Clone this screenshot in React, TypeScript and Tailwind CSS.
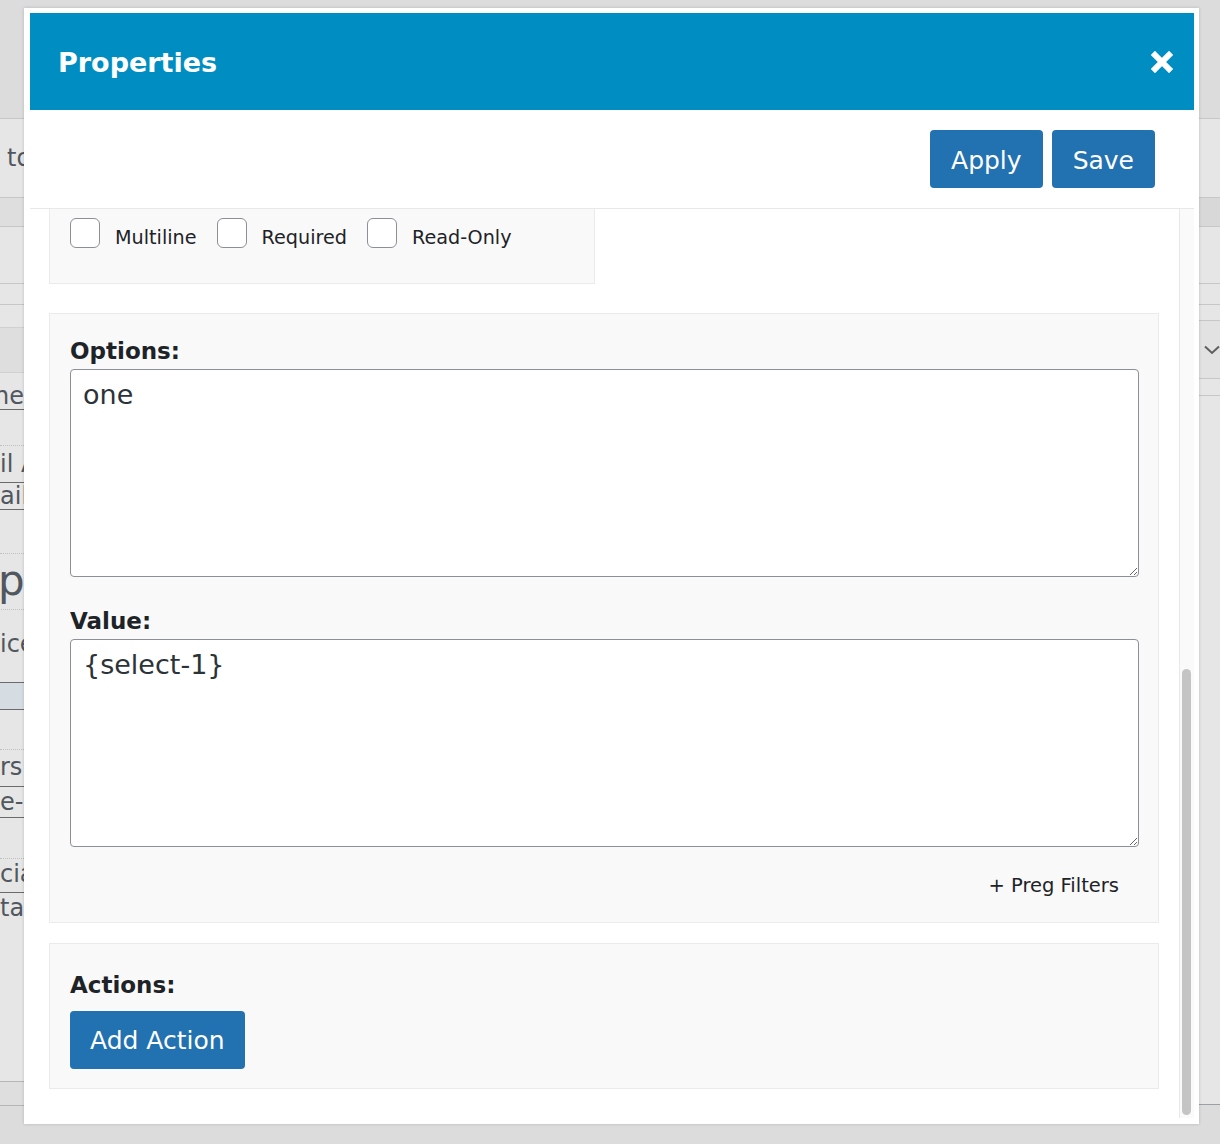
import React from "react"

const font = "font-['DejaVu_Sans','Verdana',sans-serif]"

function Checkbox({ label }: { label: string }) {
  return (
    <label className="flex items-start">
      <input
        type="checkbox"
        className="appearance-none w-[30px] h-[30px] border border-[#8c8f94] rounded-[6px] bg-white"
      />
      <span className="ml-[15px] mt-[5px] leading-[30px] text-[19.2px] text-[#1d2327]">{label}</span>
    </label>
  )
}

function BackdropLeft() {
  return (
    <div className="w-[24px] h-full overflow-hidden flex flex-col text-[#50575e] text-[24px] whitespace-nowrap">
      <div className="h-[119px] shrink-0 bg-[#dcdcdc] border-b border-[#c7c7c7]" />
      <div className="h-[79px] shrink-0 bg-[#e6e6e6] border-b border-[#c7c7c7] flex items-center pl-[7px]">to</div>
      <div className="h-[29px] shrink-0 bg-[#dedede] border-b border-[#c7c7c7]" />
      <div className="h-[57px] shrink-0 bg-[#e6e6e6] border-b border-[#c7c7c7]" />
      <div className="h-[21px] shrink-0 bg-[#e6e6e6] border-b border-[#c7c7c7]" />
      <div className="h-[776px] shrink-0 bg-[#e6e6e6] flex flex-col">
        <div className="h-[22px]" />
        <div className="h-[46px] bg-[#dedede] border-y border-[#d0d0d0]" />
        <div className="h-[12px]" />
        <div className="h-[25px] leading-[22px] border-b border-[#6b6b6b] -ml-[6px]">ne</div>
        <div className="h-[36px] border-b border-dotted border-[#c0c0c0]" />
        <div className="h-[37px] leading-[36px] border-b border-[#6b6b6b]">il A</div>
        <div className="h-[27px] leading-[26px] border-b border-[#6b6b6b]">ail</div>
        <div className="h-[44px] border-b border-dotted border-[#c0c0c0]" />
        <div className="h-[56px] leading-[54px] text-[42px] -ml-[2px] border-b border-dotted border-[#c0c0c0]">p</div>
        <div className="h-[73px] leading-[64px] border-b border-[#6b6b6b] flex items-end pb-[6px]">ice</div>
        <div className="h-[27px] bg-[#d5dde3] border-b border-[#6b6b6b]" />
        <div className="h-[40px] border-b border-dotted border-[#c0c0c0]" />
        <div className="h-[37px] leading-[34px] border-b border-[#6b6b6b]">rs</div>
        <div className="h-[31px] leading-[30px] border-b border-[#6b6b6b]">e-1</div>
        <div className="h-[41px] border-b border-dotted border-[#c0c0c0]" />
        <div className="h-[34px] leading-[30px] border-b border-[#6b6b6b]">cia</div>
        <div className="h-[30px] leading-[30px]">tar</div>
      </div>
      <div className="h-[25px] shrink-0 bg-[#dedede] border-y border-[#b5b5b5]" />
      <div className="flex-1 bg-[#dcdcdc]" />
    </div>
  )
}

function BackdropRight() {
  return (
    <div className="w-[21px] h-full overflow-hidden flex flex-col">
      <div className="h-[119px] shrink-0 bg-[#dcdcdc] border-b border-[#c7c7c7]" />
      <div className="h-[79px] shrink-0 bg-[#e6e6e6] border-b border-[#c7c7c7]" />
      <div className="h-[29px] shrink-0 bg-[#d8d8d8] border-b border-[#c7c7c7]" />
      <div className="h-[57px] shrink-0 bg-[#e6e6e6] border-b border-[#c7c7c7]" />
      <div className="h-[21px] shrink-0 bg-[#e6e6e6] border-b border-[#c7c7c7]" />
      <div className="h-[16px] shrink-0 bg-[#e6e6e6] border-b border-[#c7c7c7]" />
      <div className="h-[58px] shrink-0 bg-[#e2e2e2] border-b border-[#c7c7c7] flex items-center pl-[5px]">
        <svg width="16" height="10" viewBox="0 0 16 10" fill="none">
          <path d="M1 1.5 L8 8 L15 1.5" stroke="#5f5f5f" strokeWidth="2" />
        </svg>
      </div>
      <div className="h-[17px] shrink-0 bg-[#e6e6e6] border-b border-[#c7c7c7]" />
      <div className="h-[709px] shrink-0 bg-[#e6e6e6] border-b border-[#9aa0a6]" />
      <div className="flex-1 bg-[#dcdcdc]" />
    </div>
  )
}

export default function App() {
  return (
    <div className={`relative w-[1220px] h-[1144px] overflow-hidden bg-[#dcdcdc] ${font}`}>
      <div className="flex justify-between h-full">
        <BackdropLeft />
        <BackdropRight />
      </div>

      <div className="absolute left-[24px] top-[8px] w-[1175px] h-[1116px] bg-white shadow-[0_0_3px_rgba(0,0,0,0.18)] flex flex-col pt-[5px] pl-[6px] pr-[5px] pb-[6px]">
        <div className="h-[97px] shrink-0 bg-[#008ec2] flex items-center justify-between pl-[28px] pr-[21px]">
          <h1 className="mt-[4px] text-[27px] font-bold text-white">Properties</h1>
          <svg width="22" height="22" viewBox="0 0 22 22">
            <path d="M4 4 L18 18 M18 4 L4 18" stroke="#fff" strokeWidth="6" strokeLinecap="square" />
          </svg>
        </div>

        <div className="h-[99px] shrink-0 border-b border-[#e8e8e8] flex items-center justify-end gap-[9px] pr-[39px]">
          <button className="h-[58px] px-[21px] pt-[4px] rounded-[4px] bg-[#2271b1] text-white text-[25px]">Apply</button>
          <button className="h-[58px] px-[21px] pt-[4px] rounded-[4px] bg-[#2271b1] text-white text-[25px]">Save</button>
        </div>

        <div className="flex-1 flex overflow-hidden">
          <div className="flex-1 pl-[19px] pr-[20px]">
            <div className="w-[546px] h-[75px] bg-[#f9f9f9] border border-t-0 border-[#ebebeb] pl-[20px] pt-[9px] flex items-start gap-[20px]">
              <Checkbox label="Multiline" />
              <Checkbox label="Required" />
              <Checkbox label="Read-Only" />
            </div>

            <div className="mt-[29px] bg-[#f9f9f9] border border-[#ebebeb] pt-[25px] pb-[24px] pl-[20px] pr-[19px]">
              <div className="text-[23px] leading-[24px] font-bold text-[#1d2327] mb-[6px]">Options:</div>
              <textarea
                defaultValue="one"
                className="block w-full h-[208px] bg-white border border-[#8c8f94] rounded-[4px] px-[12px] pt-[6px] text-[27px] leading-[1.4] text-[#2c3338] outline-none"
              />
              <div className="mt-[32px] text-[23px] leading-[24px] font-bold text-[#1d2327] mb-[6px]">Value:</div>
              <textarea
                defaultValue="{select-1}"
                className="block w-full h-[208px] bg-white border border-[#8c8f94] rounded-[4px] px-[12px] pt-[6px] text-[27px] leading-[1.4] text-[#2c3338] outline-none"
              />
              <div className="mt-[27px] leading-[24px] text-[19.5px] text-[#1d2327] text-right pr-[20px]">+ Preg Filters</div>
            </div>

            <div className="mt-[20px] bg-[#f9f9f9] border border-[#ebebeb] pt-[29px] pb-[19px] pl-[20px]">
              <div className="text-[23px] leading-[24px] font-bold text-[#1d2327] mb-[14px]">Actions:</div>
              <button className="h-[58px] px-[20px] pt-[2px] rounded-[4px] bg-[#2271b1] text-white text-[25px]">Add Action</button>
            </div>
          </div>

          <div className="w-[15px] shrink-0 border-l border-[#e8e8e8] bg-[#fafafa] flex flex-col justify-end pb-[3px] pl-[2px]">
            <div className="w-[9px] h-[446px] rounded-full bg-[#c4c4c4]" />
          </div>
        </div>
      </div>
    </div>
  )
}
